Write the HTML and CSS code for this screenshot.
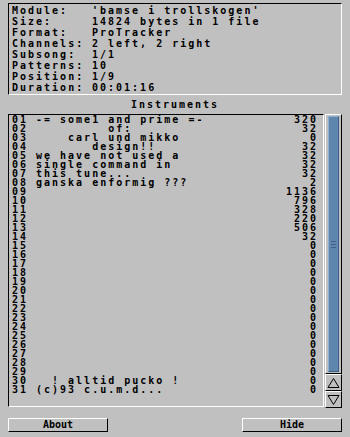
FILE: index.html
```html
<!DOCTYPE html>
<html lang="en">
  <head>
    <meta charset="UTF-8" />
    <title>Module info</title>
    <link rel="stylesheet" href="styles.css">
  </head>
  <body>
    <div id="modinfo">
      <div class="info">
        <div class="info-row"><span class="label">Module:</span><span>'bamse i trollskogen'</span></div>
        <div class="info-row"><span class="label">Size:</span><span>14824 bytes in 1 file</span></div>
        <div class="info-row"><span class="label">Format:</span><span>ProTracker</span></div>
        <div class="info-row"><span class="label">Channels:</span><span>2 left, 2 right</span></div>
        <div class="info-row"><span class="label">Subsong:</span><span>1/1</span></div>
        <div class="info-row"><span class="label">Patterns:</span><span>10</span></div>
        <div class="info-row"><span class="label">Position:</span><span>1/9</span></div>
        <div class="info-row"><span class="label">Duration:</span><span>00:01:16</span></div>
      </div>

      <div class="title">Instruments</div>

      <div class="instr">
        <div class="list">
          <div class="row"><span class="num">01</span><span class="name">-= some1 and prime =-</span><span class="size">320</span></div>
          <div class="row"><span class="num">02</span><span class="name">         of:</span><span class="size">32</span></div>
          <div class="row"><span class="num">03</span><span class="name">    carl und mikko</span><span class="size">0</span></div>
          <div class="row"><span class="num">04</span><span class="name">       design!!</span><span class="size">32</span></div>
          <div class="row"><span class="num">05</span><span class="name">we have not used a</span><span class="size">32</span></div>
          <div class="row"><span class="num">06</span><span class="name">single command in</span><span class="size">32</span></div>
          <div class="row"><span class="num">07</span><span class="name">this tune...</span><span class="size">32</span></div>
          <div class="row"><span class="num">08</span><span class="name">ganska enformig ???</span><span class="size">2</span></div>
          <div class="row"><span class="num">09</span><span class="name"></span><span class="size">1136</span></div>
          <div class="row"><span class="num">10</span><span class="name"></span><span class="size">796</span></div>
          <div class="row"><span class="num">11</span><span class="name"></span><span class="size">328</span></div>
          <div class="row"><span class="num">12</span><span class="name"></span><span class="size">220</span></div>
          <div class="row"><span class="num">13</span><span class="name"></span><span class="size">506</span></div>
          <div class="row"><span class="num">14</span><span class="name"></span><span class="size">32</span></div>
          <div class="row"><span class="num">15</span><span class="name"></span><span class="size">0</span></div>
          <div class="row"><span class="num">16</span><span class="name"></span><span class="size">0</span></div>
          <div class="row"><span class="num">17</span><span class="name"></span><span class="size">0</span></div>
          <div class="row"><span class="num">18</span><span class="name"></span><span class="size">0</span></div>
          <div class="row"><span class="num">19</span><span class="name"></span><span class="size">0</span></div>
          <div class="row"><span class="num">20</span><span class="name"></span><span class="size">0</span></div>
          <div class="row"><span class="num">21</span><span class="name"></span><span class="size">0</span></div>
          <div class="row"><span class="num">22</span><span class="name"></span><span class="size">0</span></div>
          <div class="row"><span class="num">23</span><span class="name"></span><span class="size">0</span></div>
          <div class="row"><span class="num">24</span><span class="name"></span><span class="size">0</span></div>
          <div class="row"><span class="num">25</span><span class="name"></span><span class="size">0</span></div>
          <div class="row"><span class="num">26</span><span class="name"></span><span class="size">0</span></div>
          <div class="row"><span class="num">27</span><span class="name"></span><span class="size">0</span></div>
          <div class="row"><span class="num">28</span><span class="name"></span><span class="size">0</span></div>
          <div class="row"><span class="num">29</span><span class="name"></span><span class="size">0</span></div>
          <div class="row"><span class="num">30</span><span class="name">  ! alltid pucko !</span><span class="size">0</span></div>
          <div class="row"><span class="num">31</span><span class="name">(c)93 c.u.m.d...</span><span class="size">0</span></div>
        </div>
        <div class="scroll">
          <div class="track">
            <div class="knob"><span class="grip"></span></div>
          </div>
          <div class="arrow">
            <svg width="13" height="12" viewBox="0 0 13 12"><polygon points="6.5,1.5 12,10.5 1,10.5" fill="none" stroke="#000" stroke-width="1"/></svg>
          </div>
          <div class="arrow">
            <svg width="13" height="12" viewBox="0 0 13 12"><polygon points="1,1.5 12,1.5 6.5,10.5" fill="none" stroke="#000" stroke-width="1"/></svg>
          </div>
        </div>
      </div>

      <div class="buttons">
        <button class="btn">About</button>
        <button class="btn">Hide</button>
      </div>
    </div>
  </body>
</html>
```

FILE: styles.css
```css
* {
  padding: 0;
  margin: 0;
  box-sizing: border-box;
}
body {
  background: #c0c0c0;
  color: #000;
  font: bold 10px "DejaVu Sans Mono", monospace;
  letter-spacing: 2px;
}
#modinfo {
  width: 350px;
  height: 437px;
  padding: 3px 8px 0 8px;
}
.info {
  height: 92px;
  padding: 1px 3px;
  border-top: 1px solid #000;
  border-left: 1px solid #000;
  border-right: 1px solid #fff;
  border-bottom: 1px solid #fff;
}
.info-row {
  display: flex;
  height: 11px;
  line-height: 11px;
  white-space: pre;
}
.label {
  width: 80px;
}
.title {
  margin: 4px 0;
  height: 11px;
  line-height: 11px;
  text-align: center;
}
.instr {
  display: flex;
  gap: 1px;
  height: 294px;
}
.list {
  width: 316px;
  height: 293px;
  padding: 0 5px 0 3px;
  border-top: 1px solid #000;
  border-left: 1px solid #000;
  border-right: 1px solid #fff;
  border-bottom: 1px solid #fff;
}
.row {
  display: flex;
  height: 9px;
  line-height: 9px;
  white-space: pre;
}
.num {
  width: 24px;
}
.name {
  flex: 1;
}
.size {
  text-align: right;
}
.scroll {
  width: 17px;
  display: flex;
  flex-direction: column;
}
.track {
  flex: 1;
  padding: 1px 2px 1px 2px;
  border-top: 1px solid #fff;
  border-left: 1px solid #fff;
  border-right: 1px solid #000;
  border-bottom: 1px solid #000;
}
.knob {
  height: 100%;
  display: flex;
  align-items: center;
  justify-content: center;
  background: #5f87ae;
  border-top: 1px solid #8fb0d0;
  border-left: 1px solid #8fb0d0;
  border-right: 1px solid #3e6088;
  border-bottom: 1px solid #3e6088;
}
.grip {
  width: 5px;
  height: 7px;
  border-top: 1px solid #3e6088;
  border-bottom: 1px solid #3e6088;
  background: linear-gradient(#3e6088, #3e6088) center / 5px 1px no-repeat;
}
.arrow {
  height: 17px;
  display: flex;
  align-items: center;
  justify-content: center;
  border-top: 1px solid #fff;
  border-left: 1px solid #fff;
  border-right: 1px solid #000;
  border-bottom: 1px solid #000;
}
.buttons {
  display: flex;
  justify-content: space-between;
  margin-top: 10px;
}
.btn {
  width: 100px;
  height: 14px;
  font: inherit;
  line-height: 12px;
  background: #c0c0c0;
  color: #000;
  border-top: 1px solid #fff;
  border-left: 1px solid #fff;
  border-right: 1px solid #000;
  border-bottom: 1px solid #000;
}
```
